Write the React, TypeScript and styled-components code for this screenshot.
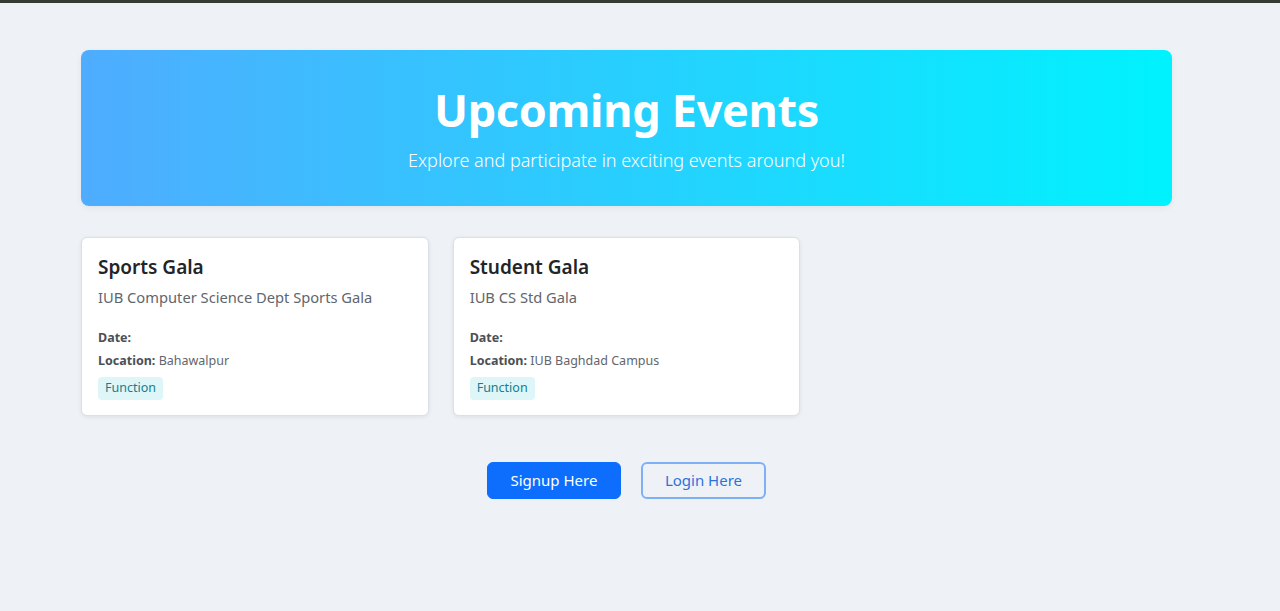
import React from "react";
import styled, { createGlobalStyle } from "styled-components";

const Global = createGlobalStyle`
  html, body { margin: 0; padding: 0; }
  body {
    background: #eef2f7;
    font-family: "Noto Sans", "Open Sans", sans-serif;
    color: #212529;
  }
  * { box-sizing: border-box; }
`;

const TopBar = styled.div`
  height: 3px;
  background: #343a34;
`;

const Page = styled.main`
  width: 1091px;
  margin: 47px 0 0 81px;
  display: flex;
  flex-direction: column;
`;

const Hero = styled.header`
  height: 156px;
  border-radius: 8px;
  background: linear-gradient(90deg, #4facfe 0%, #00f2fe 100%);
  color: #fff;
  display: flex;
  flex-direction: column;
  align-items: center;
  padding-top: 33px;
  box-shadow: 0 2px 6px rgba(0, 0, 0, 0.06);
`;

const HeroTitle = styled.h1`
  margin: 0;
  font-size: 45px;
  font-weight: 700;
  line-height: 1.2;
  letter-spacing: -0.3px;
`;

const HeroSub = styled.p`
  margin: 10px 0 0;
  font-size: 18px;
  font-weight: 300;
  line-height: 1.5;
`;

const Grid = styled.section`
  margin-top: 31px;
  display: grid;
  grid-template-columns: repeat(3, 1fr);
  gap: 24px;
  align-items: start;
`;

const Card = styled.article`
  background: #fff;
  border: 1px solid #dcdfe3;
  border-radius: 6px;
  padding: 18px 16px 15px;
  box-shadow: 0 1px 4px rgba(0, 0, 0, 0.08);
  display: flex;
  flex-direction: column;
  align-items: flex-start;
`;

const CardTitle = styled.h5`
  margin: 0;
  font-size: 19px;
  font-weight: 600;
  line-height: 1.2;
  color: #212529;
`;

const CardText = styled.p`
  margin: 7px 0 0;
  font-size: 14.7px;
  line-height: 1.5;
  color: #5f666d;
`;

const Meta = styled.p<{ $first?: boolean }>`
  margin: ${(p) => (p.$first ? "21px" : "4px")} 0 0;
  font-size: 12.5px;
  line-height: 1.5;
  color: #5f666d;
  strong { color: #495057; font-weight: 700; }
`;

const Badge = styled.span`
  margin-top: 7px;
  background: #dff6f9;
  color: #127f8c;
  font-size: 12.5px;
  line-height: 1;
  padding: 5px 7px;
  border-radius: 4px;
`;

const Actions = styled.div`
  margin-top: 46px;
  display: flex;
  justify-content: center;
  gap: 20px;
`;

const Button = styled.button<{ $outline?: boolean }>`
  font-family: inherit;
  font-size: 15px;
  height: 37px;
  padding: 0 ${(p) => (p.$outline ? "22px" : "22.5px")};
  border-radius: 6px;
  cursor: pointer;
  border: ${(p) => (p.$outline ? "2px solid #7fb0f5" : "1px solid #0d6efd")};
  background: ${(p) => (p.$outline ? "transparent" : "#0d6efd")};
  color: ${(p) => (p.$outline ? "#2c72dc" : "#fff")};
`;

const events = [
  { title: "Sports Gala", desc: "IUB Computer Science Dept Sports Gala", location: "Bahawalpur", type: "Function" },
  { title: "Student Gala", desc: "IUB CS Std Gala", location: "IUB Baghdad Campus", type: "Function" },
];

export default function App() {
  return (
    <>
      <Global />
      <TopBar />
      <Page>
        <Hero>
          <HeroTitle>Upcoming Events</HeroTitle>
          <HeroSub>Explore and participate in exciting events around you!</HeroSub>
        </Hero>
        <Grid>
          {events.map((e) => (
            <Card key={e.title}>
              <CardTitle>{e.title}</CardTitle>
              <CardText>{e.desc}</CardText>
              <Meta $first><strong>Date:</strong></Meta>
              <Meta><strong>Location:</strong> {e.location}</Meta>
              <Badge>{e.type}</Badge>
            </Card>
          ))}
        </Grid>
        <Actions>
          <Button>Signup Here</Button>
          <Button $outline>Login Here</Button>
        </Actions>
      </Page>
    </>
  );
}
